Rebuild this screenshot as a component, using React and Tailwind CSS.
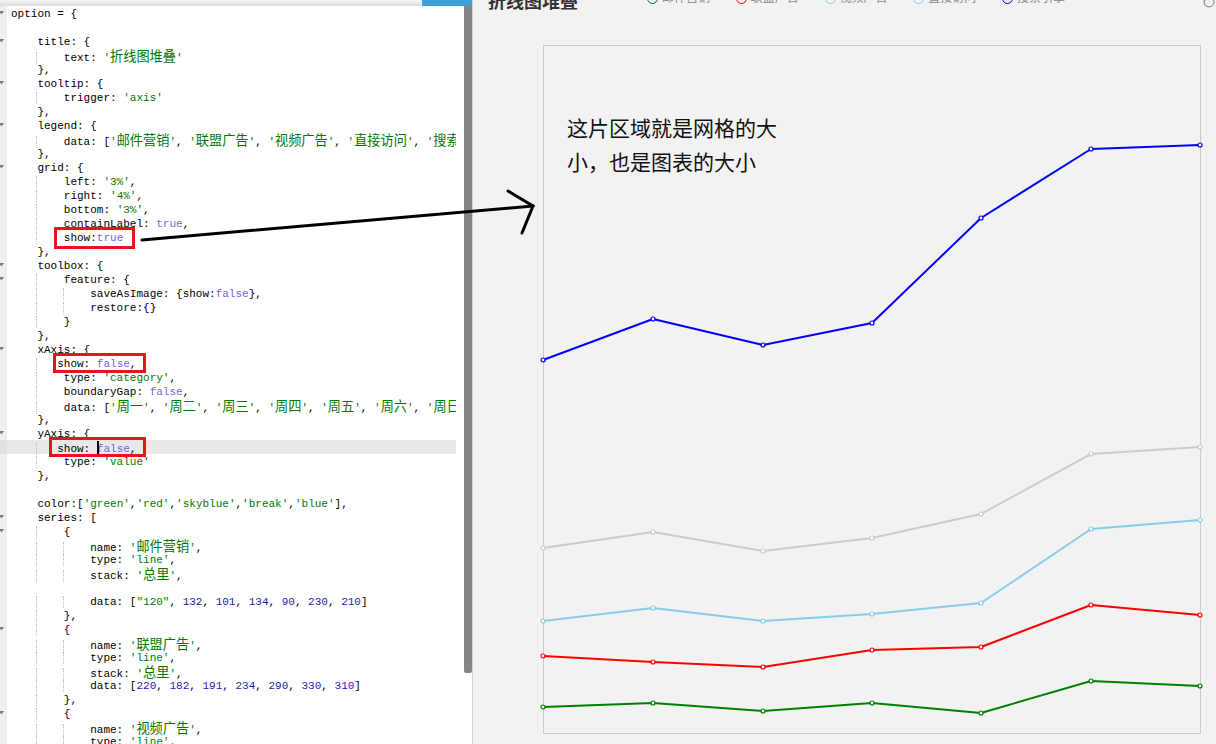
import React from "react";

const LINES = [
  "option = {",
  "",
  "    title: {",
  "        text: '折线图堆叠'",
  "    },",
  "    tooltip: {",
  "        trigger: 'axis'",
  "    },",
  "    legend: {",
  "        data: ['邮件营销', '联盟广告', '视频广告', '直接访问', '搜索引擎']",
  "    },",
  "    grid: {",
  "        left: '3%',",
  "        right: '4%',",
  "        bottom: '3%',",
  "        containLabel: true,",
  "        show:true",
  "    },",
  "    toolbox: {",
  "        feature: {",
  "            saveAsImage: {show:false},",
  "            restore:{}",
  "        }",
  "    },",
  "    xAxis: {",
  "       show: false,",
  "        type: 'category',",
  "        boundaryGap: false,",
  "        data: ['周一', '周二', '周三', '周四', '周五', '周六', '周日']",
  "    },",
  "    yAxis: {",
  "       show: |false,",
  "        type: 'value'",
  "    },",
  "",
  "    color:['green','red','skyblue','break','blue'],",
  "    series: [",
  "        {",
  "            name: '邮件营销',",
  "            type: 'line',",
  "            stack: '总里',",
  "",
  "            data: [\"120\", 132, 101, 134, 90, 230, 210]",
  "        },",
  "        {",
  "            name: '联盟广告',",
  "            type: 'line',",
  "            stack: '总里',",
  "            data: [220, 182, 191, 234, 290, 330, 310]",
  "        },",
  "        {",
  "            name: '视频广告',",
  "            type: 'line',",
  "            stack: '总里',",
];

const FOLDS = new Set([0, 2, 5, 8, 11, 18, 19, 24, 30, 36, 37, 44, 50]);
const TOKEN_RE = /('[^']*'?|"[^"]*"|\btrue\b|\bfalse\b|\b\d+\b)/g;
const CJK_RE = /([\u3000-\u9fff\uff00-\uffef]+)/g;

function Str({ text }) {
  const parts = text.split(CJK_RE);
  return (
    <span className="text-[#007a00]">
      {parts.map((p, i) =>
        i % 2 === 1 ? (
          <span key={i} className="text-[13.2px] font-['Noto_Sans_CJK_SC',sans-serif]">
            {p}
          </span>
        ) : (
          <span key={i}>{p}</span>
        )
      )}
    </span>
  );
}

function Plain({ text }) {
  const parts = text.split("|");
  return (
    <span className="text-black">
      {parts.map((p, i) => (
        <React.Fragment key={i}>
          {i > 0 && <span className="relative inline-block w-[2px] h-[13px] -mr-[2px] bg-black align-[-2px]" />}
          {p}
        </React.Fragment>
      ))}
    </span>
  );
}

function CodeLine({ text, idx }) {
  const m = text.match(/^ */)[0].length;
  const body = text.slice(m);
  const blocks = [];
  for (let c = 0; c < m; c += 4) {
    const len = Math.min(4, m - c);
    blocks.push(
      c === 0 ? (
        <span key={c}>{" ".repeat(len)}</span>
      ) : (
        <span key={c} className="-ml-px border-l border-dotted border-[#bdbdbd]">
          {" ".repeat(len)}
        </span>
      )
    );
  }
  const parts = body.split(TOKEN_RE);
  const active = idx === 31;
  return (
    <div className={`flex h-[14px] leading-[14px] ${active ? "bg-[#e8e8e8]" : ""}`}>
      <div className={`w-[7px] shrink-0 flex items-center ${active ? "bg-[#e2e2e2]" : "bg-[#eeeeee]"}`}>
        {FOLDS.has(idx) && (
          <svg width="5" height="4" viewBox="0 0 5 4" className="-ml-[1px]">
            <polygon points="0,0 5,0 2.5,3.5" fill="#7a7a7a" />
          </svg>
        )}
      </div>
      <div className="pl-[4px] whitespace-pre text-[11px] translate-y-px">
        {blocks}
        {parts.map((p, i) => {
          if (i % 2 === 0) return p ? <Plain key={i} text={p} /> : null;
          if (p[0] === "'" || p[0] === '"') return <Str key={i} text={p} />;
          if (p === "true" || p === "false")
            return (
              <span key={i} className="text-[#7563e8]">
                {p}
              </span>
            );
          return (
            <span key={i} className="text-[#1c1cb4]">
              {p}
            </span>
          );
        })}
      </div>
    </div>
  );
}

const XS = [0, 110, 220, 329, 438, 548, 657];
const SERIES = [
  { c: "#0000ff", y: [315, 274, 300, 278, 173, 104, 100] },
  { c: "#cccccc", y: [503, 487, 506, 493, 469, 409, 402] },
  { c: "#87ceeb", y: [576, 563, 576, 569, 558, 484, 475] },
  { c: "#ff0000", y: [611, 617, 622, 605, 602, 560, 570] },
  { c: "#008000", y: [662, 658, 666, 658, 668, 636, 641] },
];

const LEGEND = [
  { n: "邮件营销", c: "#008000" },
  { n: "联盟广告", c: "#ff0000" },
  { n: "视频广告", c: "#87ceeb" },
  { n: "直接访问", c: "#87ceeb" },
  { n: "搜索引擎", c: "#0000ff" },
];

export default function App() {
  return (
    <div className="relative flex w-[1216px] h-[744px] overflow-hidden bg-white font-['Liberation_Mono','Noto_Sans_CJK_SC',monospace]">
      {/* Left: code editor */}
      <div className="w-[472px] shrink-0 flex flex-col">
        <div className="flex h-[6px] shrink-0">
          <div className="flex-1 bg-gradient-to-b from-[#f4f4f4] to-[#dedede]" />
          <div className="w-[50px] bg-[#3ea0da]" />
        </div>
        <div className="flex flex-1 min-h-0">
          <div className="w-[456px] shrink-0 overflow-hidden">
            {LINES.map((t, i) => (
              <CodeLine key={i} text={t} idx={i} />
            ))}
          </div>
          <div className="w-[8px] shrink-0 bg-white" />
          <div className="w-[8px] shrink-0 bg-white">
            <div className="h-[667px] bg-[#858585] rounded-b-[2px]" />
          </div>
        </div>
      </div>
      <div className="w-px shrink-0 bg-[#cfcfcf]" />

      {/* Right: chart */}
      <div className="flex-1 flex flex-col bg-[#f2f2f2] font-['Noto_Sans_CJK_SC',sans-serif]">
        <div className="flex items-center h-[20px] -mt-[10px] pl-[15px]">
          <div className="text-[18px] font-bold text-[#333] leading-[20px] w-[90px] whitespace-nowrap">折线图堆叠</div>
          <div className="flex items-center ml-[69px] -mt-[4px]">
            {LEGEND.map((l) => (
              <div key={l.n} className="flex items-center w-[88.75px]">
                <span
                  className="w-[11px] h-[11px] rounded-full border-[1.5px] bg-[#f2f2f2]"
                  style={{ borderColor: l.c }}
                />
                <span className="ml-[4px] -mt-[3px] text-[12px] text-[#888] leading-none">{l.n}</span>
              </div>
            ))}
          </div>
          <svg width="12" height="12" viewBox="0 0 12 12" className="ml-auto mr-[1px] mt-[4px]">
            <path d="M2 3 A5 5 0 1 0 7 1" fill="none" stroke="#777" strokeWidth="1" />
            <path d="M1 1 L2 4 L5 3" fill="none" stroke="#777" strokeWidth="1" />
          </svg>
        </div>

        <div className="relative ml-[70px] mt-[35px] w-[658px] h-[689px] border border-[#cccccc] bg-[#f2f2f2]">
          <div className="ml-[23px] mt-[64px] w-[220px] text-[21px] leading-[34px] text-[#111]">
            这片区域就是网格的大小，也是图表的大小
          </div>
          <svg
            className="absolute -left-px -top-px overflow-visible"
            width="658"
            height="689"
            viewBox="0 0 658 689"
          >
            {SERIES.map((s) => (
              <g key={s.c}>
                <polyline
                  points={XS.map((x, i) => `${x},${s.y[i]}`).join(" ")}
                  fill="none"
                  stroke={s.c}
                  strokeWidth="2"
                  strokeLinejoin="round"
                />
                {XS.map((x, i) => (
                  <circle key={i} cx={x} cy={s.y[i]} r="2" fill="#ffffff" stroke={s.c} strokeWidth="1.2" />
                ))}
              </g>
            ))}
          </svg>
        </div>
      </div>

      {/* Annotations */}
      <div className="absolute left-[54px] top-[227px] w-[81px] h-[22px] border-[3px] border-[#e8141b]" />
      <div className="absolute left-[53px] top-[353px] w-[93px] h-[20px] border-[3px] border-[#e8141b]" />
      <div className="absolute left-[49px] top-[437px] w-[97px] h-[20px] border-[3px] border-[#e8141b]" />
      <svg className="absolute left-0 top-0 pointer-events-none" width="1216" height="744">
        <line x1="142" y1="240" x2="533" y2="206" stroke="#000" strokeWidth="3" strokeLinecap="round" />
        <line x1="508" y1="191" x2="533" y2="206" stroke="#000" strokeWidth="3" strokeLinecap="round" />
        <line x1="533" y1="206" x2="522" y2="233" stroke="#000" strokeWidth="3" strokeLinecap="round" />
      </svg>
    </div>
  );
}
